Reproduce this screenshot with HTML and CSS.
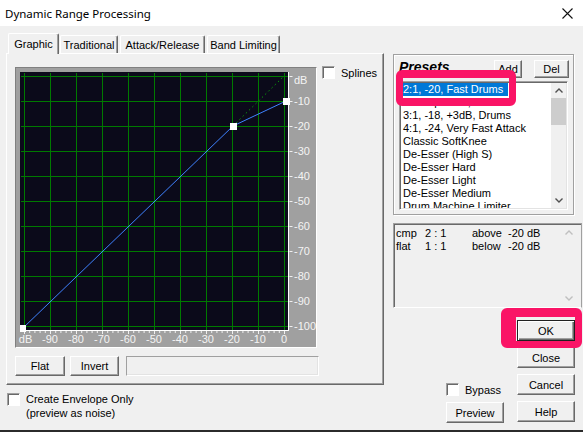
FILE: index.html
```html
<!DOCTYPE html>
<html>
<head>
<meta charset="utf-8">
<title>Dynamic Range Processing</title>
<link rel="stylesheet" href="styles.css">
</head>
<body>
<div class="window">
  <div class="titlebar">
    <span class="title">Dynamic Range Processing</span>
    <svg class="close-x" width="11" height="11" viewBox="0 0 11 11"><path d="M0.5 0.5L10.5 10.5M10.5 0.5L0.5 10.5" stroke="#111" stroke-width="1.1" fill="none"/></svg>
  </div>
  <div class="body">
    <div class="left">
      <div class="tabs">
        <div class="tab active">Graphic</div>
        <div class="tab t2">Traditional</div>
        <div class="tab t3">Attack/Release</div>
        <div class="tab t4">Band Limiting</div>
      </div>
      <div class="pane">
        <div class="graph-row">
          <div class="graph">
            <svg class="plot" width="300" height="279" viewBox="0 0 300 279">
              <rect x="4" y="4" width="269" height="259" fill="#0b0a1a"/>
              <path d="M8.5 5V262M34.5 5V262M60.5 5V262M86.5 5V262M112.5 5V262M138.5 5V262M164.5 5V262M190.5 5V262M216.5 5V262M242.5 5V262M268.5 5V262" stroke="#007a00" stroke-width="1" fill="none"/>
              <path d="M5 8.5H272M5 33.5H272M5 58.5H272M5 83.5H272M5 108.5H272M5 133.5H272M5 158.5H272M5 183.5H272M5 208.5H272M5 233.5H272M5 258.5H272" stroke="#007a00" stroke-width="1" fill="none"/>
              <path d="M272.5 4V263M4 262.5H273" stroke="#ffffff" stroke-width="1" fill="none"/>
              <line x1="8" y1="264" x2="270" y2="264" stroke="#f0f0f0" stroke-width="2" stroke-dasharray="1 4.2"/>
              <line x1="8" y1="264.5" x2="270" y2="264.5" stroke="#f0f0f0" stroke-width="3" stroke-dasharray="1 25"/>
              <line x1="275" y1="8" x2="275" y2="260" stroke="#f0f0f0" stroke-width="3" stroke-dasharray="1 24"/>
              <path d="M217 58L268 8" stroke="#0a9a0a" stroke-width="1" stroke-dasharray="1.5 3" fill="none"/>
              <path d="M7 260L217 58L270 33" stroke="#3f82ff" stroke-width="1" fill="none"/>
              <rect x="4" y="257" width="6" height="7" fill="#ffffff"/>
              <rect x="214" y="55" width="7" height="7" fill="#ffffff"/>
              <rect x="267" y="30" width="7" height="7" fill="#ffffff"/>
              <g class="lbl-b" text-anchor="middle">
                <text x="9.5" y="275">dB</text>
                <text x="34" y="275">-90</text>
                <text x="60" y="275">-80</text>
                <text x="86" y="275">-70</text>
                <text x="112" y="275">-60</text>
                <text x="138" y="275">-50</text>
                <text x="164" y="275">-40</text>
                <text x="190" y="275">-30</text>
                <text x="216" y="275">-20</text>
                <text x="242" y="275">-10</text>
                <text x="268" y="275">0</text>
              </g>
              <g class="lbl-r">
                <text x="278" y="16">dB</text>
                <text x="278" y="37">-10</text>
                <text x="278" y="62">-20</text>
                <text x="278" y="87">-30</text>
                <text x="278" y="112">-40</text>
                <text x="278" y="137">-50</text>
                <text x="278" y="162">-60</text>
                <text x="278" y="187">-70</text>
                <text x="278" y="212">-80</text>
                <text x="278" y="237">-90</text>
                <text x="278" y="262">-100</text>
              </g>
            </svg>
          </div>
          <div class="check splines"><span class="box"></span><span>Splines</span></div>
        </div>
        <div class="btn-row">
          <div class="btn flat">Flat</div>
          <div class="btn invert">Invert</div>
          <div class="progress"></div>
        </div>
      </div>
      <div class="envelope">
        <span class="box"></span>
        <div class="env-text">Create Envelope Only<br>(preview as noise)</div>
      </div>
    </div>

    <div class="right">
      <div class="presets">
        <div class="presets-head">
          <span class="presets-label">Presets</span>
          <div class="btn add">Add</div>
          <div class="btn del">Del</div>
        </div>
        <div class="listbox">
          <div class="items">
            <div class="item sel">2:1, -20, Fast Drums</div>
            <div class="item">2:1 Expander, Vocals</div>
            <div class="item">3:1, -18, +3dB, Drums</div>
            <div class="item">4:1, -24, Very Fast Attack</div>
            <div class="item">Classic SoftKnee</div>
            <div class="item">De-Esser (High S)</div>
            <div class="item">De-Esser Hard</div>
            <div class="item">De-Esser Light</div>
            <div class="item">De-Esser Medium</div>
            <div class="item">Drum Machine Limiter</div>
          </div>
          <div class="vscroll">
            <div class="sb-btn"><svg width="8" height="5" viewBox="0 0 8 5"><path d="M0.5 4.5L4 1L7.5 4.5" fill="none" stroke="#505050" stroke-width="1.4"/></svg></div>
            <div class="thumb"></div>
            <div class="sb-track"></div>
            <div class="sb-btn"><svg width="8" height="5" viewBox="0 0 8 5"><path d="M0.5 0.5L4 4L7.5 0.5" fill="none" stroke="#505050" stroke-width="1.4"/></svg></div>
          </div>
        </div>
      </div>

      <div class="info">
        <div class="info-text">
          <span>cmp</span><span>2 : 1</span><span>above</span><span>-20 dB</span>
          <span>flat</span><span>1 : 1</span><span>below</span><span>-20 dB</span>
        </div>
        <div class="info-scroll">
          <div class="sb-btn"><svg width="8" height="5" viewBox="0 0 8 5"><path d="M0.5 4.5L4 1L7.5 4.5" fill="none" stroke="#bfbfbf" stroke-width="1.4"/></svg></div>
          <div class="sb-btn"><svg width="8" height="5" viewBox="0 0 8 5"><path d="M0.5 0.5L4 4L7.5 0.5" fill="none" stroke="#bfbfbf" stroke-width="1.4"/></svg></div>
        </div>
      </div>

      <div class="bottom">
        <div class="bottom-left">
          <div class="check bypass"><span class="box"></span><span>Bypass</span></div>
          <div class="btn preview">Preview</div>
        </div>
        <div class="bottom-right">
          <div class="btn default">OK</div>
          <div class="btn">Close</div>
          <div class="btn">Cancel</div>
          <div class="btn">Help</div>
        </div>
      </div>
    </div>
  </div>

  <div class="mark mark1"></div>
  <div class="mark mark2"></div>
</div>
</body>
</html>
```

FILE: styles.css
```css
* { box-sizing: border-box; }
html, body { margin: 0; padding: 0; background: #2b2b2b; }

.window {
  position: relative;
  width: 583px;
  height: 430px;
  background: #f0f0f0;
  overflow: hidden;
  font-family: "Liberation Sans", Arial, sans-serif;
  font-size: 11px;
  color: #000;
}

.titlebar {
  height: 26px;
  background: #fff;
  display: flex;
  align-items: center;
  justify-content: space-between;
  padding: 0 10px 0 5px;
}
.title { font-family: "Noto Sans", "Open Sans", sans-serif; font-size: 11.5px; }
.close-x { display: block; }

.body { display: flex; padding-top: 7px; }

/* left side */
.left { margin-left: 6px; width: 378px; }

.tabs {
  display: flex;
  align-items: flex-end;
  height: 20px;
  padding-left: 2px;
  position: relative;
  z-index: 1;
}
.tab {
  height: 18px;
  border-top: 1px solid #fff;
  border-left: 1px solid #fff;
  border-right: 1px solid #696969;
  box-shadow: inset -1px 0 #a0a0a0;
  border-radius: 2px 2px 0 0;
  display: flex;
  align-items: center;
  justify-content: center;
  padding-top: 1px;
  white-space: nowrap;
}
.tab.active { width: 51px; height: 21px; margin-bottom: -1px; background: #f0f0f0; padding-top: 0; }
.tab.t2 { width: 58px; margin-left: 1px; }
.tab.t3 { width: 85px; margin-left: 2px; }
.tab.t4 { width: 73px; margin-left: 2px; }

.pane {
  height: 332px;
  border: 1px solid;
  border-color: #fff #696969 #696969 #fff;
  box-shadow: inset -1px -1px #a0a0a0;
}

.graph-row { display: flex; margin-top: 13px; padding-left: 8px; }
.graph {
  width: 302px;
  height: 281px;
  background: #a0a0a0;
  border: 1px solid;
  border-color: #808080 #fff #fff #808080;
}
.plot { display: block; }
.lbl-b text, .lbl-r text {
  font-family: "Liberation Sans", Arial, sans-serif;
  font-size: 11px;
  fill: #f4f4f4;
}

.check { display: flex; align-items: center; gap: 6px; height: 13px; white-space: nowrap; }
.box {
  display: block;
  flex: none;
  width: 13px;
  height: 13px;
  background: #fff;
  border: 1px solid;
  border-color: #a0a0a0 #fff #fff #a0a0a0;
  box-shadow: inset 1px 1px #696969;
}
.splines { margin-left: 5px; margin-top: -1px; }

.btn {
  display: flex;
  align-items: center;
  justify-content: center;
  background: #f0f0f0;
  border: 1px solid;
  border-color: #fff #696969 #696969 #fff;
  box-shadow: inset -1px -1px #a0a0a0;
  white-space: nowrap;
}
.btn.default {
  border-color: #202020;
  box-shadow: inset 1px 1px #fff, inset -1px -1px #696969, inset -2px -2px #a0a0a0;
}

.btn-row { display: flex; margin-top: 8px; padding-left: 8px; }
.flat { width: 50px; height: 20px; }
.invert { width: 49px; height: 20px; margin-left: 5px; }
.progress {
  width: 193px;
  height: 20px;
  margin-left: 7px;
  border: 1px solid;
  border-color: #a0a0a0 #fff #fff #a0a0a0;
  box-shadow: inset -1px -1px #e3e3e3;
}

.envelope { display: flex; align-items: flex-start; gap: 6px; margin-top: 8px; margin-left: 1px; }
.env-text { line-height: 14px; margin-top: -1px; }

/* right side */
.right { margin-left: 9px; margin-top: 21px; width: 190px; }

.presets {
  width: 181px;
  height: 161px;
  border: 1px solid #a0a0a0;
  box-shadow: inset 1px 1px #fff, 1px 1px #fff;
}
.presets-head { display: flex; align-items: flex-start; height: 18px; margin-top: 5px; padding: 0 4px 0 5px; }
.presets-label {
  flex: 1;
  font-weight: bold;
  font-style: italic;
  font-size: 14px;
  line-height: 16px;
  margin-top: -1px;
}
.add { width: 28px; height: 18px; }
.del { width: 35px; height: 18px; margin-left: 12px; }

.listbox {
  display: flex;
  width: 169px;
  height: 129px;
  margin: 3px 0 0 5px;
  padding: 1px;
  background: #fff;
  border: 1px solid;
  border-color: #a0a0a0 #fff #fff #a0a0a0;
  box-shadow: inset 1px 1px #696969, inset -1px -1px #e3e3e3;
}
.items { flex: 1; overflow: hidden; }
.item { height: 13px; line-height: 13px; padding-left: 2px; white-space: nowrap; }
.item.sel { width: 107px; background: #0078d7; color: #fff; }

.vscroll { width: 15px; display: flex; flex-direction: column; background: #f0f0f0; }
.sb-btn { height: 15px; flex: none; display: flex; align-items: center; justify-content: center; }
.sb-btn svg { display: block; }
.thumb { height: 27px; background: #cdcdcd; }
.sb-track { flex: 1; }

.info {
  display: flex;
  width: 189px;
  height: 85px;
  margin-top: 8px;
  padding: 1px;
  border: 1px solid;
  border-color: #a0a0a0 #a0a0a0 #fff #a0a0a0;
  box-shadow: inset 1px 1px #696969;
}
.info-text {
  flex: 1;
  display: grid;
  grid-template-columns: 29px 47px 36px auto;
  grid-auto-rows: 13px;
  align-content: start;
  line-height: 13px;
  padding: 2px 0 0 1px;
  white-space: nowrap;
}
.info-scroll {
  width: 17px;
  margin-right: 3px;
  display: flex;
  flex-direction: column;
  justify-content: space-between;
}

.bottom { display: flex; height: 122px; padding-left: 53px; }
.bottom-left { width: 58px; display: flex; flex-direction: column; }
.bypass { margin-top: 75px; }
.preview { height: 21px; margin-top: 6px; }
.bottom-right { margin-left: 13px; padding-top: 12px; display: flex; flex-direction: column; gap: 6px; }
.bottom-right .btn { width: 58px; height: 21px; }

/* annotation marks */
.mark {
  position: absolute;
  border-style: solid;
  border-color: #fa1466;
  border-radius: 6px;
}
.mark1 { left: 396px; top: 70px; width: 120px; height: 36px; border-width: 8px 7px 8px 7px; }
.mark2 { left: 501px; top: 308px; width: 81px; height: 40px; border-width: 9px 7px 7px 15px; }
```
